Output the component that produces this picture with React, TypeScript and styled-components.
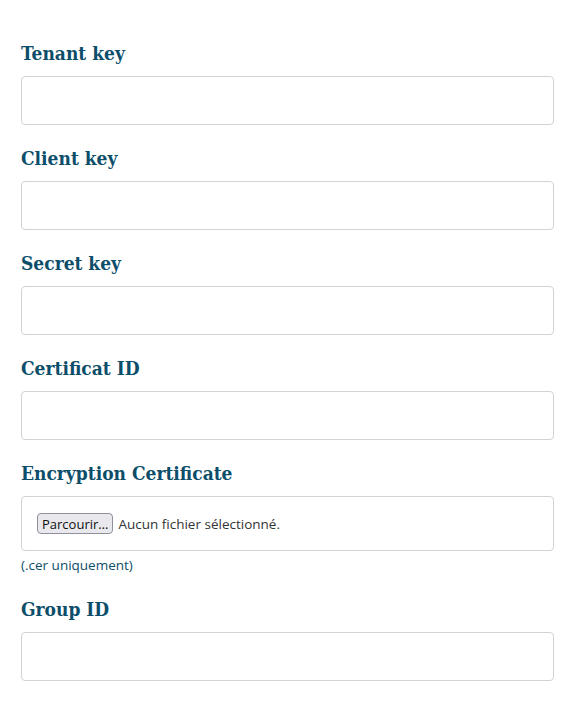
import React from 'react';
import styled, { createGlobalStyle } from 'styled-components';

const GlobalStyle = createGlobalStyle`
    body {
        margin: 0;
        background: #ffffff;
        font-family: "Open Sans", "Liberation Sans", sans-serif;
    }
`;

const LABEL_COLOR = '#0c4e6a';
const BORDER_COLOR = '#d3d3d3';

interface IField {
    id: string;
    label: string;
}

const fields: IField[] = [
    { id: 'tenant', label: 'Tenant key' },
    { id: 'client', label: 'Client key' },
    { id: 'secret', label: 'Secret key' },
    { id: 'certificat', label: 'Certificat ID' },
];

const App = (): JSX.Element => {
    return (
        <>
            <GlobalStyle />
            <SForm>
                {fields.map((f) => (
                    <SField key={f.id}>
                        <SLabel htmlFor={f.id}>{f.label}</SLabel>
                        <SInput id={f.id} type="text" />
                    </SField>
                ))}
                <SField>
                    <SLabel as="span">Encryption Certificate</SLabel>
                    <SFileBox>
                        <SBrowse type="button">Parcourir…</SBrowse>
                        <SFileName>Aucun fichier sélectionné.</SFileName>
                    </SFileBox>
                    <SHint>(.cer uniquement)</SHint>
                </SField>
                <SField>
                    <SLabel htmlFor="group">Group ID</SLabel>
                    <SInput id="group" type="text" />
                </SField>
            </SForm>
        </>
    );
};

const SForm = styled.form`
    display: flex;
    flex-direction: column;
    gap: 21px;
    padding: 41px 20px 20px 21px;
    box-sizing: border-box;
    width: 574px;
`;

const SField = styled.div`
    display: flex;
    flex-direction: column;
`;

const SLabel = styled.label`
    display: block;
    font-family: "Roboto Slab", "DejaVu Serif", serif;
    font-stretch: condensed;
    font-weight: bold;
    font-size: 19px;
    line-height: 24px;
    color: ${LABEL_COLOR};
    margin-bottom: 11px;
`;

const SInput = styled.input`
    box-sizing: border-box;
    height: 49px;
    width: 100%;
    border: 1px solid ${BORDER_COLOR};
    border-radius: 4px;
    background: #ffffff;
    padding: 0 12px;
    font-size: 14px;
    outline: none;
`;

const SFileBox = styled.div`
    box-sizing: border-box;
    height: 55px;
    display: flex;
    align-items: center;
    gap: 5px;
    padding: 0 15px;
    border: 1px solid ${BORDER_COLOR};
    border-radius: 4px;
`;

const SBrowse = styled.button`
    font-family: "Open Sans", "Liberation Sans", sans-serif;
    font-size: 13px;
    color: #111;
    height: 21px;
    padding: 0 4px;
    background: #e9e9ed;
    border: 1px solid #8f8f9d;
    border-radius: 4px;
`;

const SFileName = styled.span`
    font-size: 13.5px;
    color: #333;
`;

const SHint = styled.span`
    margin-top: 5px;
    margin-bottom: 2px;
    font-size: 13.5px;
    color: ${LABEL_COLOR};
`;

export default App;
